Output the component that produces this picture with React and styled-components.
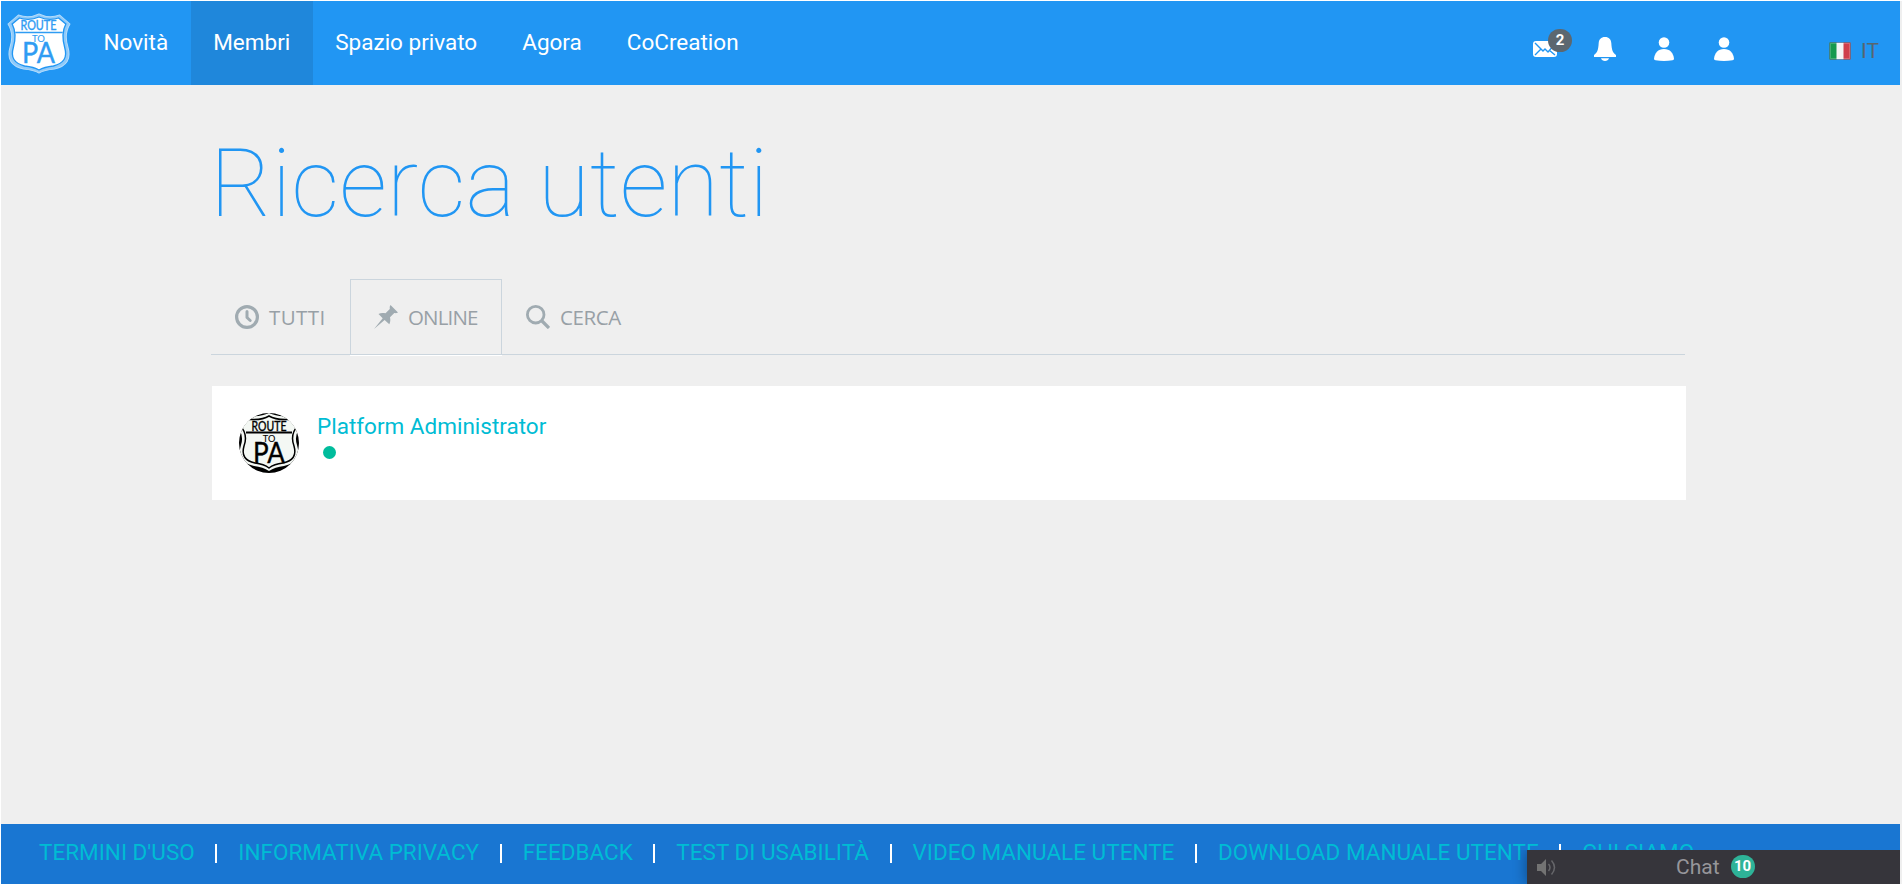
import React from "react";
import styled, { createGlobalStyle } from "styled-components";

const Global = createGlobalStyle`
  * { box-sizing: border-box; }
  html, body { margin: 0; padding: 0; background: #fff; }
  body { font-family: Roboto, "Liberation Sans", sans-serif; font-size: 22.5px; overflow: hidden; }
  a { text-decoration: none; color: inherit; }
`;

const Page = styled.div`
  position: relative;
  display: flex;
  flex-direction: column;
  width: 1901px;
  height: 883px;
  margin: 1px 0 0 1px;
  background: #efefef;
`;

const Header = styled.header`
  display: flex;
  width: 1899px;
  height: 84px;
  flex: none;
  background: #2196f3;
`;

const Brand = styled.a`
  width: 80px;
  padding: 12px 0 0 6px;
`;

const Nav = styled.nav`
  display: flex;
`;

const NavItem = styled.a`
  height: 84px;
  padding: 0 22.5px;
  line-height: 82px;
  color: #fff;
  white-space: nowrap;
  background: ${(p) => (p.$active ? "#1f87db" : "transparent")};
`;

const Actions = styled.div`
  display: flex;
  align-items: flex-start;
  margin-left: auto;
  padding-right: 21px;
`;

const Action = styled.a`
  position: relative;
  display: block;
  width: ${(p) => p.$w}px;
  height: 24px;
  margin-top: 36px;
  svg { display: block; }
`;

const MailBadge = styled.span`
  position: absolute;
  left: 15px;
  top: -8px;
  width: 24px;
  height: 23px;
  border-radius: 12px;
  background: #5c6770;
  color: #fff;
  font: 700 15px/22px Roboto, sans-serif;
  text-align: center;
`;

const Language = styled.a`
  display: flex;
  align-items: center;
  gap: 10px;
  height: 26px;
  margin-top: 37px;
  color: #58666e;
  font-size: 21px;
`;

const Main = styled.main`
  flex: 1;
  width: 1474px;
  margin-left: 210px;
`;

const Title = styled.h1`
  margin: 43px 0 0 -1px;
  height: 151px;
  color: #2196f3;
  font-size: 94.5px;
  font-weight: 100;
  line-height: 112px;
  white-space: nowrap;
`;

const Tabs = styled.div`
  display: flex;
  height: 76px;
  border-bottom: 1px solid #cbd5dd;
`;

const Tab = styled.a`
  display: flex;
  align-items: center;
  gap: 10px;
  width: ${(p) => p.$w}px;
  height: 76px;
  padding: 0 0 1px 23px;
  border: solid ${(p) => (p.$active ? "#cbd5dd" : "transparent")};
  border-width: 1px 1px 0;
  box-shadow: ${(p) => (p.$active ? "0 1px 0 #fff" : "none")};
  border-bottom: ${(p) => (p.$active ? "1px solid #cbd5dd" : "0")};
  color: #98a0a6;
  font: 400 20.5px "Open Sans", "Noto Sans", sans-serif;
  letter-spacing: ${(p) => p.$track || 0}px;
  white-space: nowrap;
  svg { flex: none; }
`;

const Card = styled.section`
  display: flex;
  gap: 18px;
  width: 1474px;
  height: 114px;
  margin: 31px 0 0 1px;
  padding: 27px;
  background: #fff;
`;

const UserInfo = styled.div`
  display: flex;
  flex-direction: column;
`;

const UserName = styled.a`
  color: #00bcd4;
  line-height: 26px;
`;

const OnlineDot = styled.span`
  width: 13px;
  height: 13px;
  margin: 7px 0 0 6px;
  border-radius: 50%;
  background: #00bc9c;
`;

const Footer = styled.footer`
  display: flex;
  align-items: flex-start;
  width: 1899px;
  height: 60px;
  flex: none;
  padding: 15px 0 0 38px;
  background: #1976d2;
`;

const FooterLink = styled.a`
  color: #00bcd4;
  line-height: 26px;
  white-space: nowrap;
  &:not(:first-child) {
    display: flex;
    &::before {
      content: "";
      width: 2px;
      height: 19px;
      margin: 5px 20.9px 0 20.7px;
      background: #fff;
    }
  }
`;

const ChatBar = styled.aside`
  position: absolute;
  left: 1526px;
  bottom: 0;
  display: flex;
  align-items: center;
  width: 373px;
  height: 34px;
  padding-left: 10px;
  background: #36353b;
  box-shadow: 0 0 14px rgba(0, 0, 0, 0.4);
  clip-path: inset(0 0 0 -20px);
  color: #96969a;
  font-size: 21px;
`;

const ChatLabel = styled.span`
  margin-left: 120px;
  line-height: 32px;
`;

const ChatCount = styled.span`
  width: 24px;
  height: 23px;
  margin: -2px 0 0 11px;
  border-radius: 12px;
  background: #2eb398;
  color: #fff;
  font: 700 15px/22px Roboto, sans-serif;
  text-align: center;
`;

const SHIELD =
  "M11 2 Q21 6 31 1 Q41 6 51 2 L61 11 Q55 21 59 34 Q64 52 46 56 Q36 57 31 60 Q26 57 16 56 Q-2 52 3 34 Q7 21 1 11 Z";
const SHIELD_INNER =
  "M12 5 Q22 8 31 4 Q40 8 50 5 L57 11 Q52 21 56 35 Q60 49 45 53 Q36 54 31 57 Q26 54 17 53 Q2 49 6 35 Q10 21 5 11 Z";

const ShieldWords = ({ fill, cx }) => (
  <g fill={fill} stroke={fill} fontFamily="Lato, sans-serif" textAnchor="middle">
    <text x={cx} y="17.5" fontSize="13" strokeWidth=".4" textLength="35" lengthAdjust="spacingAndGlyphs">ROUTE</text>
    <text x={cx} y="28.800" fontSize="10" strokeWidth=".1" textLength="12.500" lengthAdjust="spacingAndGlyphs">TO</text>
    <text x={cx} y="50" fontSize="28" strokeWidth=".4" textLength="32" lengthAdjust="spacingAndGlyphs">PA</text>
  </g>
);

const Logo = () => (
  <svg width="64" height="61" viewBox="0 0 62 61" preserveAspectRatio="none">
    <path d={SHIELD} fill="#8fcaf9" stroke="#b5dcfb" strokeWidth="1" />
    <path d={SHIELD_INNER} fill="#fff" stroke="#2196f3" strokeWidth="1.3" />
    <path d="M8 19.500h46" stroke="#2f9cf3" strokeWidth="1.5" />
    <ShieldWords fill="#2f9cf3" cx={30.5} />
  </svg>
);

const Avatar = () => (
  <svg width="60" height="60" viewBox="0 0 60 60">
    <clipPath id="disc"><circle cx="30" cy="30" r="30" /></clipPath>
    <g clipPath="url(#disc)">
      <rect width="60" height="60" fill="#000" />
      <path d="M5 2 Q20 5 30 0 Q40 5 55 2 L65 11 Q54 20 58 32 Q63 49 45 53 Q36 54 30 58 Q24 54 15 53 Q-3 49 2 32 Q6 20 -5 11Z" fill="#f4f8f4" />
      <path d="M5 6 Q22 8 30 3 Q38 8 55 6 L62 9 Q50 20 55 33 Q59 47 44 50 Q35 51 30 55 Q25 51 16 50 Q1 47 5 33 Q10 20 -2 9Z" fill="#f4f8f4" stroke="#000" strokeWidth="1.5" />
      <path d="M7 19.5h46" stroke="#000" strokeWidth="1.8" />
      <ShieldWords fill="#000" cx={30} />
    </g>
  </svg>
);

const MailIcon = () => (
  <svg width="24" height="24" viewBox="0 0 24 24">
    <rect y="4" width="24" height="16" rx="3" fill="#fff" />
    <path d="M2 6l8 8 2-2 3 3 7-8M2 18l6-6M22 18l-6-5" fill="none" stroke="#2196f3" strokeWidth="1.4" />
  </svg>
);

const BellIcon = () => (
  <svg width="22" height="24" viewBox="0 0 22 24">
    <path d="M11 0c4 0 6 2.500 6.300 6 .5 7 1.200 9.500 4.700 12v2H0v-2C3.500 15.500 4.200 13 4.700 6 5 2.500 7 0 11 0z" fill="#fff" />
    <path d="M7 21.300h8c-.6 1.800-2 2.700-4 2.700s-3.400-.9-4-2.700z" fill="#fff" />
  </svg>
);

const UserIcon = () => (
  <svg width="20" height="24" viewBox="0 0 20 24" fill="#fff">
    <circle cx="10" cy="5.500" r="5.300" />
    <path d="M0 22c.5-6 4-10 10-10s9.500 4 10 10q0 1-1.500 1.300Q10 24.700 1.500 23.300 0 23 0 22z" />
  </svg>
);

const Flag = () => (
  <svg width="22" height="18" viewBox="0 0 22 18">
    <rect x=".5" y=".5" width="21" height="17" rx="1" fill="#f4f4f4" />
    <path d="M.5.500h7v17h-7z" fill="#16994e" />
    <path d="M14.500.500h7v17h-7z" fill="#cf3f4c" />
    <rect x="1.500" y="1.500" width="19" height="15" fill="none" stroke="#fff" strokeOpacity=".2" />
    <rect x=".5" y=".5" width="21" height="17" rx="1" fill="none" stroke="#243b56" strokeOpacity=".4" />
  </svg>
);

const ClockIcon = () => (
  <svg width="24" height="24" viewBox="0 0 24 24" fill="none" stroke="#a0abb1">
    <circle cx="12" cy="12" r="10.400" strokeWidth="3.200" />
    <path d="M12 6.500v6l3.200 3" strokeWidth="3" strokeLinecap="round" strokeLinejoin="round" />
  </svg>
);

const PinIcon = () => (
  <svg width="24" height="24" viewBox="0 0 24 24" fill="#a0abb1">
    <path d="M16.500 0L24 7.500c-1.500 1-2.500.7-3.700.6L16 12.300c.5 2.500.5 4.700-.7 6.900L10.600 15 0 24l8.700-10.800L4.500 9c2-1.300 4.300-1.300 7-.8l4.300-4.300C15.700 2.500 15.500 1.300 16.500 0z" />
  </svg>
);

const SearchIcon = () => (
  <svg width="24" height="24" viewBox="0 0 24 24" fill="none" stroke="#a0abb1">
    <circle cx="9.700" cy="9.700" r="8.300" strokeWidth="2.800" />
    <path d="M16 16l7 7" strokeWidth="3.300" />
  </svg>
);

const SpeakerIcon = () => (
  <svg width="19" height="17" viewBox="0 0 19 17">
    <path d="M0 5h4l5-5v17l-5-5H0z" fill="#737373" />
    <path d="M11.500 5q3 3.500 0 7M14.500 1.500q6 7 0 14" fill="none" stroke="#66666a" strokeWidth="1.500" />
  </svg>
);

const footerLinks = [
  "TERMINI D'USO",
  "INFORMATIVA PRIVACY",
  "FEEDBACK",
  "TEST DI USABILITÀ",
  "VIDEO MANUALE UTENTE",
  "DOWNLOAD MANUALE UTENTE",
  "CHI SIAMO",
];

export default function App() {
  return (
    <>
      <Global />
      <Page>
        <Header>
          <Brand href="#"><Logo /></Brand>
          <Nav>
            <NavItem href="#">Novità</NavItem>
            <NavItem href="#" $active>Membri</NavItem>
            <NavItem href="#">Spazio privato</NavItem>
            <NavItem href="#">Agora</NavItem>
            <NavItem href="#">CoCreation</NavItem>
          </Nav>
          <Actions>
            <Action href="#" $w={61}><MailIcon /><MailBadge>2</MailBadge></Action>
            <Action href="#" $w={60}><BellIcon /></Action>
            <Action href="#" $w={60}><UserIcon /></Action>
            <Action href="#" $w={115}><UserIcon /></Action>
            <Language href="#"><Flag />IT</Language>
          </Actions>
        </Header>
        <Main>
          <Title>Ricerca utenti</Title>
          <Tabs>
            <Tab href="#" $w={139} $track={0.4}><ClockIcon />TUTTI</Tab>
            <Tab href="#" $w={152} $track={-0.85} $active><PinIcon />ONLINE</Tab>
            <Tab href="#" $w={145} $track={-0.4}><SearchIcon />CERCA</Tab>
          </Tabs>
          <Card>
            <Avatar />
            <UserInfo>
              <UserName href="#">Platform Administrator</UserName>
              <OnlineDot />
            </UserInfo>
          </Card>
        </Main>
        <Footer>
          {footerLinks.map((label) => (
            <FooterLink href="#" key={label}>{label}</FooterLink>
          ))}
        </Footer>
        <ChatBar>
          <SpeakerIcon />
          <ChatLabel>Chat</ChatLabel>
          <ChatCount>10</ChatCount>
        </ChatBar>
      </Page>
    </>
  );
}
